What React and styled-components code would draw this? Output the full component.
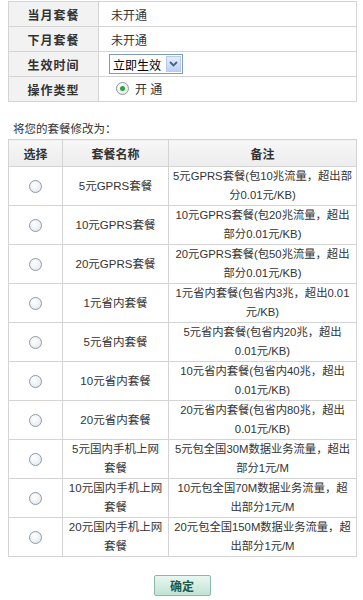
import React from "react";
import styled, { createGlobalStyle } from "styled-components";

const GlobalStyle = createGlobalStyle`
  body {
    margin: 0;
    background: #ffffff;
    font-family: "Liberation Sans", "Noto Sans CJK SC", sans-serif;
    font-size: 12px;
    color: #333333;
  }
`;

const Page = styled.div`
  padding: 1px 0 0 8px;
  width: 349px;
`;

const InfoTable = styled.table`
  width: 349px;
  border-collapse: collapse;
  table-layout: fixed;
`;

const LabelCell = styled.th`
  width: 89px;
  height: 24px;
  padding: 0;
  background: #f2f2f2;
  border: 1px solid #d4d4d4;
  font-weight: bold;
  font-size: 12px;
  color: #333;
  text-align: center;
  letter-spacing: 1px;
`;

const ValueCell = styled.td`
  height: 24px;
  padding: 0 0 0 12px;
  border: 1px solid #d4d4d4;
  color: #333;
`;

const SelectBox = styled.div`
  display: inline-flex;
  align-items: center;
  height: 18px;
  border: 1px solid #7f9db9;
  background: #fff;
  margin-left: -2px;
`;

const SelectText = styled.span`
  padding: 0 4px 0 3px;
  font-size: 12px;
  color: #000;
`;

const SelectArrow = styled.span`
  width: 15px;
  height: 16px;
  margin: 1px;
  background: linear-gradient(#e6eefc, #bcd0f6);
  border: 1px solid #b7caf0;
  box-sizing: border-box;
  display: flex;
  align-items: center;
  justify-content: center;
`;

const RadioWrap = styled.span`
  display: inline-flex;
  align-items: center;
  gap: 6px;
  margin-left: 5px;
`;

const Radio = styled.span`
  display: inline-block;
  width: 11px;
  height: 11px;
  border-radius: 50%;
  border: 1px solid #8c9aa8;
  background: radial-gradient(circle at 40% 35%, #ffffff, #dfe4ea);
  position: relative;
  vertical-align: middle;
  &::after {
    content: "";
    display: ${(p) => (p.checked ? "block" : "none")};
    position: absolute;
    left: 3px;
    top: 3px;
    width: 5px;
    height: 5px;
    border-radius: 50%;
    background: #2fa52f;
  }
`;

const Hint = styled.div`
  margin: 19px 0 0 5px;
  height: 17px;
  line-height: 17px;
  font-size: 11.5px;
  color: #333;
`;

const PlanTable = styled.table`
  width: 349px;
  border-collapse: collapse;
  table-layout: fixed;
  margin-top: 1px;
`;

const HeadCell = styled.th`
  height: 26px;
  padding: 0;
  background: linear-gradient(#f7f7f7, #ececec);
  border: 1px solid #d4d4d4;
  font-weight: bold;
  font-size: 12px;
  color: #333;
  text-align: center;
  width: ${(p) => p.w}px;
`;

const Cell = styled.td`
  height: 38px;
  padding: 0;
  border: 1px solid #d4d4d4;
  text-align: center;
  line-height: 19px;
  font-size: ${(p) => p.size || 12}px;
  white-space: nowrap;
  overflow: hidden;
  color: #333;
`;

const Footer = styled.div`
  display: flex;
  justify-content: center;
  padding: 18px 0 0 0;
`;

const Button = styled.button`
  width: 57px;
  height: 21px;
  margin-left: -1px;
  border: 1px solid #8fb6a8;
  border-radius: 2px;
  background: linear-gradient(#e9f7f1, #bfe3d3);
  color: #1c5a4a;
  font-weight: bold;
  font-size: 12px;
  font-family: "Liberation Sans", "Noto Sans CJK SC", sans-serif;
  padding: 0;
`;

const plans = [
  ["5元GPRS套餐"], ["5元GPRS套餐(包10兆流量，超出部", "分0.01元/KB)"],
  ["10元GPRS套餐"], ["10元GPRS套餐(包20兆流量，超出", "部分0.01元/KB)"],
  ["20元GPRS套餐"], ["20元GPRS套餐(包50兆流量，超出", "部分0.01元/KB)"],
  ["1元省内套餐"], ["1元省内套餐(包省内3兆，超出0.01", "元/KB)"],
  ["5元省内套餐"], ["5元省内套餐(包省内20兆，超出", "0.01元/KB)"],
  ["10元省内套餐"], ["10元省内套餐(包省内40兆，超出", "0.01元/KB)"],
  ["20元省内套餐"], ["20元省内套餐(包省内80兆，超出", "0.01元/KB)"],
  ["5元国内手机上网", "套餐"], ["5元包全国30M数据业务流量，超出", "部分1元/M"],
  ["10元国内手机上网", "套餐"], ["10元包全国70M数据业务流量，超", "出部分1元/M"],
  ["20元国内手机上网", "套餐"], ["20元包全国150M数据业务流量，超", "出部分1元/M"],
];

const rows = [];
for (let i = 0; i < plans.length; i += 2) rows.push([plans[i], plans[i + 1]]);

const Lines = ({ lines }) =>
  lines.map((l, i) => (
    <React.Fragment key={i}>
      {i > 0 && <br />}
      {l}
    </React.Fragment>
  ));

export default function App() {
  return (
    <Page>
      <GlobalStyle />
      <InfoTable>
        <tbody>
          <tr>
            <LabelCell>当月套餐</LabelCell>
            <ValueCell>未开通</ValueCell>
          </tr>
          <tr>
            <LabelCell>下月套餐</LabelCell>
            <ValueCell>未开通</ValueCell>
          </tr>
          <tr>
            <LabelCell>生效时间</LabelCell>
            <ValueCell>
              <SelectBox>
                <SelectText>立即生效</SelectText>
                <SelectArrow>
                  <svg width="9" height="6" viewBox="0 0 9 6">
                    <path d="M1 1 L4.5 4.5 L8 1" fill="none" stroke="#4d6185" strokeWidth="1.8" />
                  </svg>
                </SelectArrow>
              </SelectBox>
            </ValueCell>
          </tr>
          <tr>
            <LabelCell>操作类型</LabelCell>
            <ValueCell>
              <RadioWrap>
                <Radio checked />
                <span>开 通</span>
              </RadioWrap>
            </ValueCell>
          </tr>
        </tbody>
      </InfoTable>

      <Hint>将您的套餐修改为：</Hint>

      <PlanTable>
        <thead>
          <tr>
            <HeadCell w={53}>选择</HeadCell>
            <HeadCell w={105}>套餐名称</HeadCell>
            <HeadCell>备注</HeadCell>
          </tr>
        </thead>
        <tbody>
          {rows.map(([name, note], i) => (
            <tr key={i}>
              <Cell>
                <Radio />
              </Cell>
              <Cell size={11.5}>
                <Lines lines={name} />
              </Cell>
              <Cell size={11.3}>
                <Lines lines={note} />
              </Cell>
            </tr>
          ))}
        </tbody>
      </PlanTable>

      <Footer>
        <Button>确定</Button>
      </Footer>
    </Page>
  );
}
